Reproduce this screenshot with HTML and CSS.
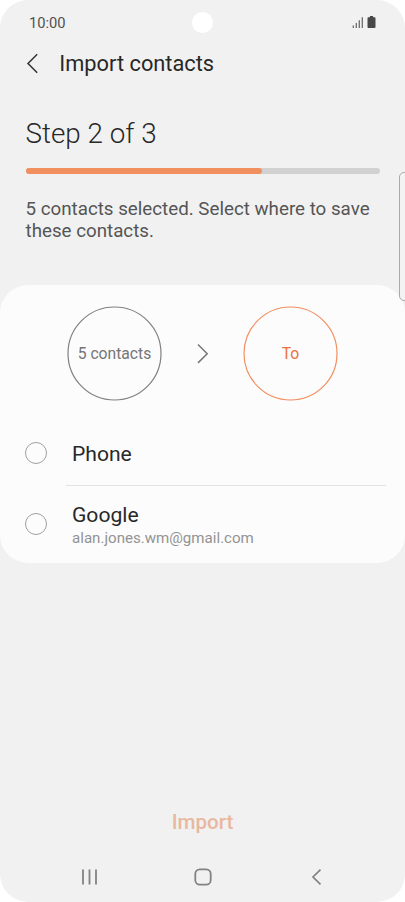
FILE: index.html
```html
<!DOCTYPE html>
<html lang="en">
<head>
<meta charset="utf-8">
<title>Import contacts</title>
<link rel="stylesheet" href="styles.css">
</head>
<body>
<div class="phone">
  <header class="status">
    <span class="clock">10:00</span>
    <span class="camera"></span>
    <svg class="status-icons" width="24" height="13" viewBox="0 0 24 13">
      <path d="M1.300 9.500v2.500M4.300 7v5M7.300 4.200V12M10.300 1.200V12" stroke="#6b6b6b" stroke-width="1.300" fill="none"/>
      <path d="M17.900 0h3.200v1.200h1.400q1 0 1 1v8.800q0 1-1 1h-6q-1 0-1-1V2.200q0-1 1-1h1.400z" fill="#484848"/>
    </svg>
  </header>
  <div class="appbar">
    <svg class="back" width="14" height="22" viewBox="0 0 14 22"><path d="M11.200 1.300L2 10.500l9.200 9.200" fill="none" stroke="#333" stroke-width="1.500"/></svg>
    <h1 class="title">Import contacts</h1>
  </div>
  <section class="intro">
    <h2 class="step">Step 2 of 3</h2>
    <div class="track"><div class="fill"></div></div>
    <p class="desc">5 contacts selected. Select where to save these contacts.</p>
  </section>
  <main class="card">
    <div class="transfer">
      <svg class="ring" width="95" height="95" viewBox="0 0 95 95"><circle cx="47.500" cy="47.500" r="46.500" fill="none" stroke="#808080" stroke-width="1.200"/><text class="ring-label" x="47.500" y="53" text-anchor="middle" fill="#757575">5 contacts</text></svg>
      <svg class="arrow" width="14" height="22" viewBox="0 0 14 22"><path d="M2 1.500L11.200 10.700 2 19.900" fill="none" stroke="#777" stroke-width="1.500"/></svg>
      <svg class="ring" width="95" height="95" viewBox="0 0 95 95"><circle cx="47.500" cy="47.500" r="46.500" fill="none" stroke="#f18f5f" stroke-width="1.200"/><text class="ring-label" x="47.500" y="53" text-anchor="middle" fill="#e9713c">To</text></svg>
    </div>
    <div class="option">
      <span class="radio"></span>
      <div class="label">Phone</div>
    </div>
    <div class="divider"></div>
    <div class="option option-google">
      <span class="radio"></span>
      <div class="account"><div class="label">Google</div><div class="email">alan.jones.wm@gmail.com</div></div>
    </div>
  </main>
  <div class="import">Import</div>
  <nav class="nav">
    <svg width="18" height="18" viewBox="0 0 18 18"><path d="M2 1.500v15M8.500 1.500v15M15 1.500v15" stroke="#828282" stroke-width="1.800"/></svg>
    <svg width="18" height="18" viewBox="0 0 18 18"><rect x="1.300" y="1.300" width="15.400" height="15.400" rx="4.500" fill="none" stroke="#828282" stroke-width="1.800"/></svg>
    <svg width="18" height="18" viewBox="0 0 18 18"><path d="M13.500 1.700L6 9l7.500 7.300" fill="none" stroke="#828282" stroke-width="1.700"/></svg>
  </nav>
  <span class="edge-handle"></span>
</div>
</body>
</html>
```
FILE: styles.css
```css
* { box-sizing: border-box; margin: 0; padding: 0; }
body { background: #fff; font-family: Roboto, sans-serif; }
svg { display: block; }
.phone {
  position: relative;
  display: flex;
  flex-direction: column;
  width: 405px;
  height: 902px;
  overflow: hidden;
  background: #f1f1f1;
  border-radius: 28px;
}
.status {
  display: grid;
  grid-template-columns: 1fr 22px 1fr;
  align-items: center;
  height: 45px;
  padding: 0 29px 0 29px;
}
.clock { font-size: 14.7px; line-height: 18px; color: #505050; }
.camera { width: 21px; height: 21px; border-radius: 50%; background: #fff; }
.status-icons { justify-self: end; }
.appbar { display: flex; align-items: center; height: 37px; padding-left: 26px; }
.title { margin-left: 19.3px; font-size: 21.8px; line-height: 26px; font-weight: 400; color: #282828; }
.intro { height: 203px; padding: 35px 25.5px 0; }
.step { font-size: 27.8px; line-height: 33px; font-weight: 300; color: #282828; }
.track { width: 354px; height: 6px; margin-top: 18px; border-radius: 3px; background: #d1d1d1; }
.fill { width: 236.5px; height: 6px; border-radius: 3px; background: #f18f5f; }
.desc { margin-top: 24px; width: 360px; font-size: 18.75px; line-height: 22px; color: #555; }
.card { height: 277.5px; background: #fcfcfc; border-radius: 28px; }
.transfer { display: flex; align-items: center; height: 116px; padding: 21px 0 0 66.5px; }
.ring { flex: none; }
.ring-label { font-size: 15.7px; }
.arrow { flex: none; margin: 0 33px 0 34.5px; }
.option { display: flex; align-items: center; height: 63px; margin-top: 21px; padding-left: 25px; }
.radio { flex: none; width: 22px; height: 22px; margin: -2px 25px 0 0; border: 1px solid #a0a0a0; border-radius: 50%; }
.label { font-size: 21.1px; line-height: 25px; color: #282828; }
.divider { height: 1px; margin: 0 19px 0 66px; background: #e2e2e2; }
.option-google { height: 76px; margin-top: 0; }
.option-google .radio { margin-top: 0; }
.account { padding-top: 4px; }
.email { font-size: 15.1px; line-height: 23px; color: #939393; }
.import { margin-top: 247.5px; text-align: center; font-size: 20.6px; line-height: 25px; font-weight: 500; color: #e9b8a0; }
.nav { display: flex; justify-content: space-between; margin-top: 33px; padding: 0 80px 0 81px; }
.edge-handle {
  position: absolute;
  top: 172px;
  right: -8px;
  width: 14px;
  height: 129px;
  border: 1px solid #aaa;
  border-radius: 5px;
  background: #f3f3f3;
}
```
